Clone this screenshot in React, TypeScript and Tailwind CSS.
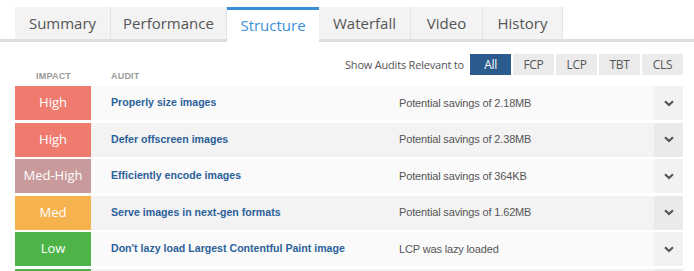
import React from "react";

const tabs = [
  { label: "Summary", w: "w-[96px]" },
  { label: "Performance", w: "w-[116px]" },
  { label: "Structure", w: "w-[92px]", active: true },
  { label: "Waterfall", w: "w-[92px]" },
  { label: "Video", w: "w-[72px]" },
  { label: "History", w: "w-[80px]" },
];

const filters = ["All", "FCP", "LCP", "TBT", "CLS"];

type Row = { impact: string; color: string; audit: string; value: string };

const rows: Row[] = [
  { impact: "High", color: "bg-[#ef7b6f]", audit: "Properly size images", value: "Potential savings of 2.18MB" },
  { impact: "High", color: "bg-[#ef7b6f]", audit: "Defer offscreen images", value: "Potential savings of 2.38MB" },
  { impact: "Med-High", color: "bg-[#c99a9b]", audit: "Efficiently encode images", value: "Potential savings of 364KB" },
  { impact: "Med", color: "bg-[#f5b24e]", audit: "Serve images in next-gen formats", value: "Potential savings of 1.62MB" },
  { impact: "Low", color: "bg-[#4db548]", audit: "Don't lazy load Largest Contentful Paint image", value: "LCP was lazy loaded" },
  { impact: "", color: "bg-[#4db548]", audit: "", value: "" },
];

function Chevron() {
  return (
    <svg width="10" height="7" viewBox="0 0 10 7">
      <path d="M1 1.2 L5 5 L9 1.2" fill="none" stroke="#555" strokeWidth="2.2" />
    </svg>
  );
}

export default function App() {
  return (
    <div className="w-[694px] h-[271px] overflow-hidden bg-white pt-[7px] font-['Open_Sans',sans-serif]">
      <div className="flex pl-[15px] border-b-[3px] border-[#dedede] h-[35px]">
        {tabs.map((t) =>
          t.active ? (
            <div
              key={t.label}
              className={`${t.w} h-[35px] bg-white border-t-[3px] border-[#3b8fd8] flex items-center justify-center text-[15px] text-[#3b8fd8] pb-[1px]`}
            >
              {t.label}
            </div>
          ) : (
            <div
              key={t.label}
              className={`${t.w} h-[32px] bg-[#f3f3f3] border-r border-[#e4e4e4] flex items-center justify-center text-[15px] text-[#555]`}
            >
              {t.label}
            </div>
          )
        )}
      </div>

      <div className="ml-[15px] mr-[11px]">
        <div className="flex justify-between mt-[12px] h-[32px]">
          <div className="flex pt-[16px] text-[9px] font-bold text-[#9a9a9a] font-['Liberation_Sans',sans-serif] tracking-[0.2px]">
            <span className="w-[96px] pl-[21px]">IMPACT</span>
            <span>AUDIT</span>
          </div>
          <div className="flex items-start">
            <span className="text-[11px] text-[#555] mr-[6px] leading-[21px] tracking-[-0.2px]">Show Audits Relevant to</span>
            <div className="flex gap-[2px]">
              {filters.map((f) => (
                <div
                  key={f}
                  className={`w-[41px] h-[21px] flex items-center justify-center text-[12px] tracking-[-0.3px] ${
                    f === "All" ? "bg-[#2c5b8d] text-white" : "bg-[#ebebeb] text-[#555]"
                  }`}
                >
                  {f}
                </div>
              ))}
            </div>
          </div>
        </div>

        <div className="flex flex-col gap-[2.5px]">
          {rows.map((r, i) => (
            <div
              key={i}
              className={`flex h-[34px] shrink-0 ${i % 2 === 0 ? "bg-[#fafafa]" : "bg-[#f3f3f3]"}`}
            >
              <div className={`w-[76px] ${r.color} text-white text-[13px] flex items-center justify-center`}>
                {r.impact}
              </div>
              <div className="w-[308px] pl-[20px] flex items-center text-[10.6px] font-bold text-[#2b6199] font-['Liberation_Sans',sans-serif]">
                {r.audit}
              </div>
              <div className="flex-1 flex items-center text-[11px] tracking-[-0.15px] text-[#555] font-['Liberation_Sans',sans-serif]">
                {r.value}
              </div>
              <div
                className={`w-[29px] flex items-center justify-center ${
                  i % 2 === 0 ? "bg-[#f2f2f2]" : "bg-[#eaeaea]"
                }`}
              >
                {r.impact && <Chevron />}
              </div>
            </div>
          ))}
        </div>
      </div>
    </div>
  );
}
